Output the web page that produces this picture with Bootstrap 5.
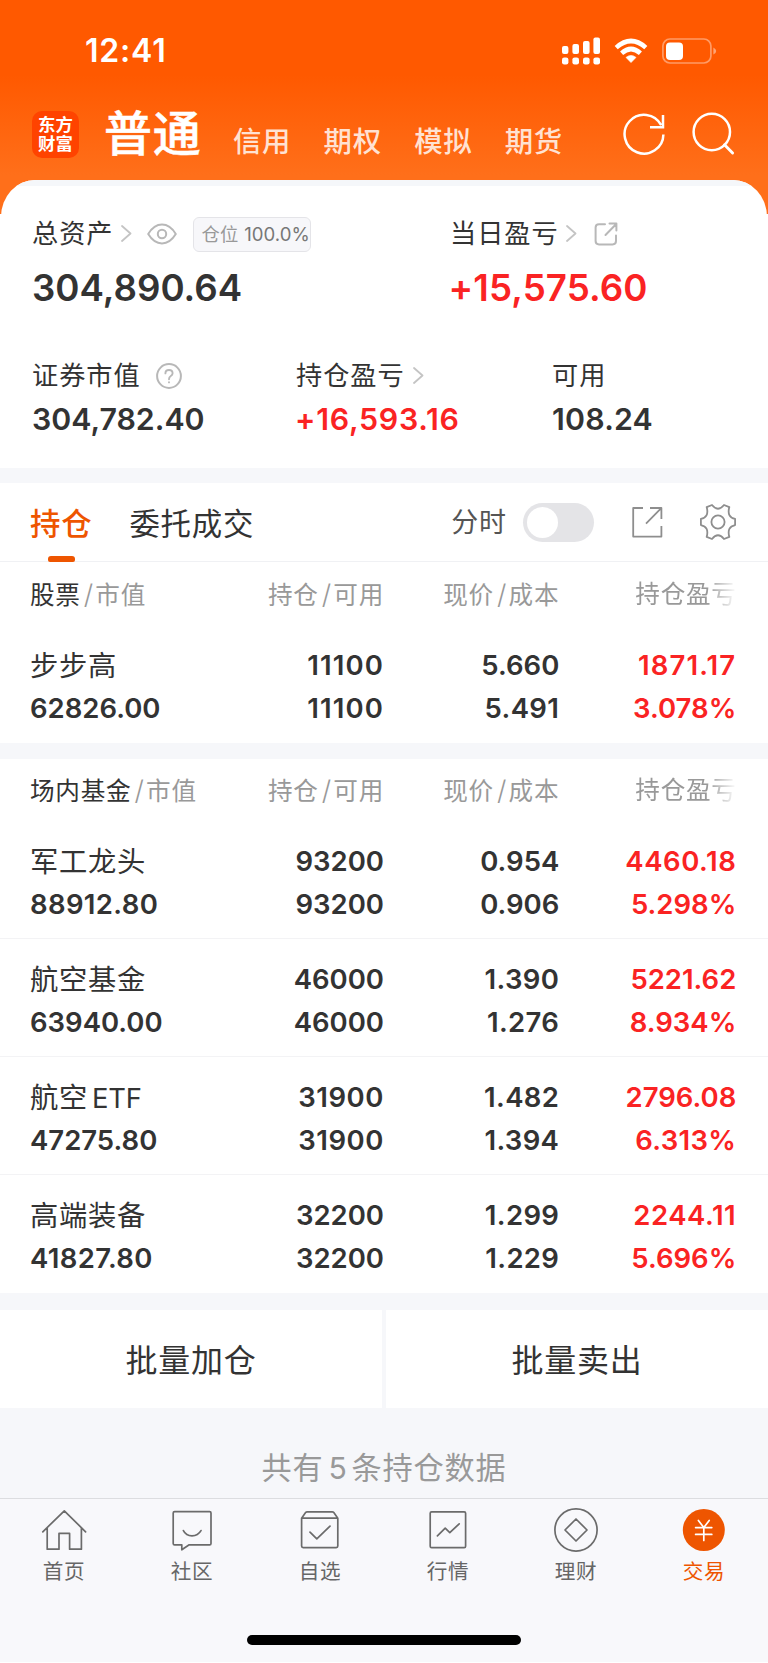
<!DOCTYPE html>
<html lang="zh-CN">
<head>
<meta charset="utf-8">
<meta name="viewport" content="width=device-width, initial-scale=1">
<title>交易 - 持仓</title>
<link href="https://cdn.jsdelivr.net/npm/bootstrap@5.3.0/dist/css/bootstrap.min.css" rel="stylesheet">
<style>
  :root { --ink:#333; --soft:#999; --rise:#fa2323; --brand:#ee5500; --band:#f6f7fa; }
  html { background:#fff; }
  body { font-family:Inter,"Noto Sans CJK SC",sans-serif; color:var(--ink); background:#fff; width:768px; margin:0; overflow-x:hidden; }
  svg { display:block; flex:none; fill:none; stroke-linecap:round; stroke-linejoin:round; }
  .rise { color:var(--rise); }
  .soft { color:var(--soft); }

  /* orange top area */
  .top-area { height:214px; margin-bottom:-34px; background:linear-gradient(#ff5900 0 75px,#ff6f1a 175px); color:#fff; }
  .status { height:104px; padding:0 51px 2px 85px; }
  .clock { font-size:32px; font-weight:600; letter-spacing:.8px; line-height:1; }
  .accounts { height:60px; padding-left:32px; }
  .logo { width:47px; height:47px; border-radius:10px; background:#ff4300; font-size:17.4px; line-height:19.5px; font-weight:700; letter-spacing:0; margin-top:0; }
  .acct-main { font-size:48px; font-weight:500; letter-spacing:.8px; line-height:60px; margin-left:25px; width:129px; -webkit-text-stroke:.5px #fff; }
  .acct { font-size:28.4px; font-weight:500; letter-spacing:.7px; line-height:60px; padding-top:15px; width:90.6px; color:rgba(255,255,255,.82); }

  /* asset summary */
  .summary { height:288px; background:#fff; border-radius:34px 34px 0 0 / 37px 37px 0 0; overflow:hidden; margin:0 1px; }
  .summary::before { content:""; display:block; height:6px; background:#f5f7fa; }
  .summary .inner { padding:24px 0 0 31px; }
  .lbl { font-size:26.2px; letter-spacing:.95px; white-space:nowrap; padding-top:2px; }
  .lbl svg { stroke:#b8b8b8; stroke-width:2; margin-top:-1px; }
  .lbl .chev { stroke:#c4c4c4; stroke-width:1.8; margin-left:8px; }
  .big-num { font-size:36.7px; font-weight:600; line-height:63px; }
  .mid-num { font-size:30.3px; font-weight:600; line-height:44px; }
  .pos-tag { width:118px; height:35px; border:1.5px solid #e4e4e8; border-radius:6px; background:#f7f7fa; font-size:18.3px; letter-spacing:.4px; color:var(--soft); padding:1px 0 0 7px; margin-left:16px; }
  .pos-tag span { color:#777; letter-spacing:0; font-size:18.6px; margin-left:5.5px; }

  .band { background:var(--band); }

  /* tabs */
  .tabs { height:79px; border-bottom:1px solid #f0f1f4; padding-left:30px; font-size:30.4px; letter-spacing:.8px; }
  .tab-on { position:relative; color:var(--brand); font-weight:500; line-height:82px; height:79px; }
  .tab-on::after { content:""; position:absolute; left:18px; bottom:0; width:27px; height:6px; border-radius:3px 3px 2px 2px; background:var(--brand); }
  .tab-off { line-height:82px; height:79px; margin-left:37px; }
  .tab-time { font-size:27px; letter-spacing:.8px; color:#555; width:56px; margin-left:197px; padding-top:3px; }
  .toggle { width:71px; height:39px; border-radius:20px; background:#e4e4e7; padding:4px; margin-left:16px; }
  .toggle i { display:block; width:31px; height:31px; border-radius:50%; background:#fff; }

  /* holdings */
  .hold { display:grid; grid-template-columns:190px 164px 175.3px 177px; padding-left:30px; }
  .hold > * { text-align:right; white-space:nowrap; }
  .hold > :first-child { text-align:left; }
  .h-head { height:62px; font-size:24.6px; letter-spacing:.75px; line-height:63px; color:var(--soft); }
  .h-head b { font-weight:400; color:var(--ink); }
  .h-head s { text-decoration:none; font-size:27px; font-weight:300; margin:0 1.5px 0 3px; }
  .fade-end { -webkit-mask-image:linear-gradient(90deg,#000 148px,transparent 178px); mask-image:linear-gradient(90deg,#000 148px,transparent 178px); text-align:left !important; padding-left:76px; }
  .h-row { height:118px; padding-top:18.5px; font-size:27.5px; font-weight:600; line-height:43px; border-bottom:1px solid #f3f3f5; }
  .h-row.last { border-color:transparent; }
  .h-row em { display:block; font-style:normal; font-weight:400; font-size:28.3px; letter-spacing:.7px; line-height:44px; height:43px; }
  .k1 { letter-spacing:.35px; } .k2 { letter-spacing:.55px; } .k3 { letter-spacing:1.1px; }

  .batch { height:98px; gap:4px; }
  .batch div { background:#fff; line-height:102px; font-size:32px; letter-spacing:.8px; text-align:center; }
  .total { height:90px; padding-top:16px; line-height:89px; font-size:30.2px; letter-spacing:.8px; }

  .tabbar { height:164px; border-top:1.5px solid #dcdde0; background:#f8f8fb; }
  .tabbar .item { padding-top:7px; font-size:20.6px; letter-spacing:.6px; line-height:36px; color:#666; }
  .tabbar svg { stroke:#6b6b6b; stroke-width:1.7; }
  .tabbar .on { color:var(--brand); }
  .home-bar { width:274px; height:10px; border-radius:5px; background:#000; margin-top:45px; }
</style>
</head>
<body>
<header class="top-area">
  <div class="status d-flex align-items-center">
    <div class="clock">12:41</div>
    <svg class="ms-auto" width="38" height="28" viewBox="0 0 38 28" style="fill:#fff"><rect x="0" y="9" width="6.4" height="8" rx="2"/><rect x="10.4" y="7" width="6.6" height="10" rx="2"/><rect x="21" y="4" width="6.6" height="13" rx="2"/><rect x="31.4" y=".5" width="6.6" height="16.5" rx="2"/><rect x="0" y="20.4" width="6.4" height="7" rx="2.2"/><rect x="10.4" y="20.4" width="6.6" height="7" rx="2.2"/><rect x="21" y="20.4" width="6.6" height="7" rx="2.2"/><rect x="31.4" y="20.4" width="6.6" height="7" rx="2.2"/></svg>
    <svg width="34" height="26" viewBox="0 0 34 26" style="margin-left:14px;stroke:#fff;stroke-width:4.6;stroke-linecap:butt"><path d="M2.2 9.6Q17-3.6 31.8 9.6M7.6 15.2Q17 6.8 26.4 15.2"/><path d="M17 24.6L12 19.4Q17 15.4 22 19.4Z" fill="#fff" stroke-width=".6"/></svg>
    <svg width="55" height="26" viewBox="0 0 55 26" style="margin-left:14px"><rect x=".9" y="1" width="48" height="24" rx="7" stroke="#fff" stroke-opacity=".4" stroke-width="1.7"/><rect x="4" y="4.4" width="17" height="17.6" rx="4" fill="#fff"/><path d="M51.4 9.4Q54.2 11 54.2 13T51.4 16.6Z" fill="#fff" fill-opacity=".45"/></svg>
  </div>
  <nav class="accounts d-flex align-items-center">
    <div class="logo d-flex align-items-center justify-content-center text-center">东方<br>财富</div>
    <div class="acct-main">普通</div>
    <div class="acct">信用</div><div class="acct">期权</div><div class="acct">模拟</div><div class="acct">期货</div>
    <svg width="44" height="44" viewBox="0 0 44 44" stroke="#fff" stroke-width="2.5" style="margin-left:27px;stroke-linecap:butt;stroke-linejoin:miter"><path d="M41.4 22.5A19.4 19.4 0 1 1 39.2 13.2M41 3V15.2H28"/></svg>
    <svg width="44" height="44" viewBox="0 0 44 44" stroke="#fff" stroke-width="2.5" style="margin-left:25px"><circle cx="20.8" cy="20" r="18.2"/><path d="M33.5 32.8L41.6 41" stroke-width="2.9"/></svg>
  </nav>
</header>

<section class="summary">
  <div class="inner">
    <div class="d-flex">
      <div style="width:418px">
        <div class="lbl d-flex align-items-center" style="height:46px">总资产
          <svg class="chev" width="11" height="17" viewBox="0 0 11 17"><path d="M1 1L9.5 8.5L1 16"/></svg>
          <svg width="30" height="22" viewBox="0 0 30 22" style="margin-left:15px"><path d="M1.2 11Q7 1.6 15 1.6T28.8 11Q23 20.4 15 20.4T1.2 11Z"/><circle cx="15" cy="11" r="4.2"/></svg>
          <div class="pos-tag d-flex align-items-center">仓位<span>100.0%</span></div>
        </div>
        <div class="big-num">304,890.64</div>
      </div>
      <div>
        <div class="lbl d-flex align-items-center" style="height:46px">当日盈亏
          <svg class="chev" width="11" height="17" viewBox="0 0 11 17" style="margin-left:7px"><path d="M1 1L9.5 8.5L1 16"/></svg>
          <svg width="24" height="24" viewBox="0 0 24 24" style="margin-left:17px"><path d="M11 2.2H5Q1.6 2.2 1.6 5.6V19Q1.6 22.4 5 22.4H18.6Q22 22.4 22 19V13.5M11.5 13L22 2.2M15.5 1.6H22.4V8.6"/></svg>
        </div>
        <div class="big-num rise" style="letter-spacing:.1px;margin-left:-1.5px">+15,575.60</div>
      </div>
    </div>
    <div class="d-flex" style="padding-top:34px">
      <div style="width:264px">
        <div class="lbl d-flex align-items-center" style="height:44px">证券市值
          <svg width="26" height="26" viewBox="0 0 26 26" style="margin-left:15px"><circle cx="13" cy="13" r="11.9"/><path d="M9.4 10.4Q9.4 7 13 7T16.6 10.3Q16.6 11.9 14.8 13T13 16.2M13 19.2V19.4" stroke-width="1.9"/></svg>
        </div>
        <div class="mid-num">304,782.40</div>
      </div>
      <div style="width:256px">
        <div class="lbl d-flex align-items-center" style="height:44px">持仓盈亏
          <svg class="chev" width="11" height="17" viewBox="0 0 11 17"><path d="M1 1L9.5 8.5L1 16"/></svg>
        </div>
        <div class="mid-num rise" style="letter-spacing:.75px;margin-left:-1px">+16,593.16</div>
      </div>
      <div>
        <div class="lbl d-flex align-items-center" style="height:44px">可用</div>
        <div class="mid-num" style="letter-spacing:.2px">108.24</div>
      </div>
    </div>
  </div>
</section>

<div class="band" style="height:15px"></div>

<section>
  <div class="tabs d-flex align-items-center">
    <div class="tab-on">持仓</div>
    <div class="tab-off">委托成交</div>
    <div class="tab-time">分时</div>
    <div class="toggle"><i></i></div>
    <svg width="32" height="32" viewBox="0 0 32 32" stroke="#8e8e8e" stroke-width="1.8" style="margin-left:37px"><path d="M12 2H2.2V30.6H30.4V20M15 17.6L30 2.4M19 2H30.4V13" stroke-linecap="butt"/></svg>
    <svg width="38" height="38" viewBox="-19 -19 38 38" stroke="#8e8e8e" stroke-width="1.8" style="margin-left:36px"><path d="M17.1-3.1V3.1Q8.6 4.9 11.3 14.8L6 17Q0 9.5-6 17L-11.3 14.8Q-8.6 4.9-17.1 3.1V-3.1Q-8.6-4.9-11.3-14.8L-6-17Q0-9.5 6-17L11.3-14.8Q8.6-4.9 17.1-3.1Z"/><circle r="6.6"/></svg>
  </div>

  <div class="hold h-head" style="height:63px;line-height:65px"><div><b>股票</b><s>/</s>市值</div><div>持仓<s>/</s>可用</div><div>现价<s>/</s>成本</div><div class="fade-end">持仓盈亏</div></div>
  <div class="hold h-row last"><div><em>步步高</em>62826.00</div><div class="k3">11100<br>11100</div><div>5.660<br><span class="k1">5.491</span></div><div class="rise"><span class="k3">1871.17</span><br>3.078%</div></div>
</section>

<div class="band" style="height:16px"></div>

<section>
  <div class="hold h-head"><div><b>场内基金</b><s>/</s>市值</div><div>持仓<s>/</s>可用</div><div>现价<s>/</s>成本</div><div class="fade-end">持仓盈亏</div></div>
  <div class="hold h-row"><div><em>军工龙头</em><span class="k1">88912.80</span></div><div>93200<br>93200</div><div>0.954<br>0.906</div><div class="rise"><span class="k2">4460.18</span><br>5.298%</div></div>
  <div class="hold h-row"><div><em>航空基金</em>63940.00</div><div>46000<br>46000</div><div class="k1">1.390<br>1.276</div><div class="rise">5221.62<br>8.934%</div></div>
  <div class="hold h-row"><div><em>航空<span style="margin-left:4px;letter-spacing:-.2px;font-size:27.4px">ETF</span></em>47275.80</div><div class="k2">31900<br>31900</div><div class="k1">1.482<br>1.394</div><div class="rise">2796.08<br><span class="k1">6.313%</span></div></div>
  <div class="hold h-row last"><div><em>高端装备</em><span class="k1">41827.80</span></div><div>32200<br>32200</div><div class="k1">1.299<br>1.229</div><div class="rise"><span class="k2">2244.11</span><br>5.696%</div></div>
</section>

<div class="band">
  <div style="height:17px"></div>
  <div class="batch d-flex"><div style="width:382px">批量加仓</div><div style="width:382px">批量卖出</div></div>
  <div class="total text-center soft">共有<span style="margin:0 4px 0 5px">5</span>条持仓数据</div>
</div>

<footer class="tabbar">
  <div class="d-flex text-center">
    <div class="item col-2"><svg class="mx-auto" width="48" height="48" viewBox="0 0 48 48"><path d="M2.8 25.8L24.3 4.8L45.6 25.8M7.2 22V43.2H19V27.4H29.6V43.2H41.4V22"/></svg>首页</div>
    <div class="item col-2"><svg class="mx-auto" width="48" height="48" viewBox="0 0 48 48"><path d="M6.6 5.7H41.6Q43 5.7 43 7.1V37.4Q43 38.8 41.6 38.8H21.2L13.8 43.8V38.8H6.6Q5.2 38.8 5.2 37.4V7.1Q5.2 5.7 6.6 5.7ZM15.4 24.6Q18 29.8 24 29.8T33 24.6"/></svg>社区</div>
    <div class="item col-2"><svg class="mx-auto" width="48" height="48" viewBox="0 0 48 48"><path d="M5.6 12.2L9.6 6.6Q10.2 5.8 11.2 5.8H36.2Q37.2 5.8 37.8 6.6L41.8 12.2V40Q41.8 41.6 40.2 41.6H7.2Q5.6 41.6 5.6 40ZH41.8M14 26.2L20.8 32.8L34 20.2"/></svg>自选</div>
    <div class="item col-2"><svg class="mx-auto" width="48" height="48" viewBox="0 0 48 48"><rect x="6.2" y="5.8" width="35.4" height="35.8" rx="1.4"/><path d="M13.4 29.8L21.2 22.2L25.8 26.6L35.2 17.8"/></svg>行情</div>
    <div class="item col-2"><svg class="mx-auto" width="48" height="48" viewBox="0 0 48 48"><circle cx="24" cy="24" r="21.1"/><path d="M24 13L35 24L24 35L13 24Z"/></svg>理财</div>
    <div class="item col-2 on"><svg class="mx-auto" width="48" height="48" viewBox="0 0 48 48"><circle cx="23.8" cy="24" r="21" fill="#ee5500" stroke="none"/><path d="M18.4 14.4L23.8 21.6L29.2 14.4M23.8 21.6V34.4M15.6 21.6H31.8M15.6 28.4H31.8" stroke="#fff"/></svg>交易</div>
  </div>
  <div class="home-bar mx-auto"></div>
</footer>
</body>
</html>
